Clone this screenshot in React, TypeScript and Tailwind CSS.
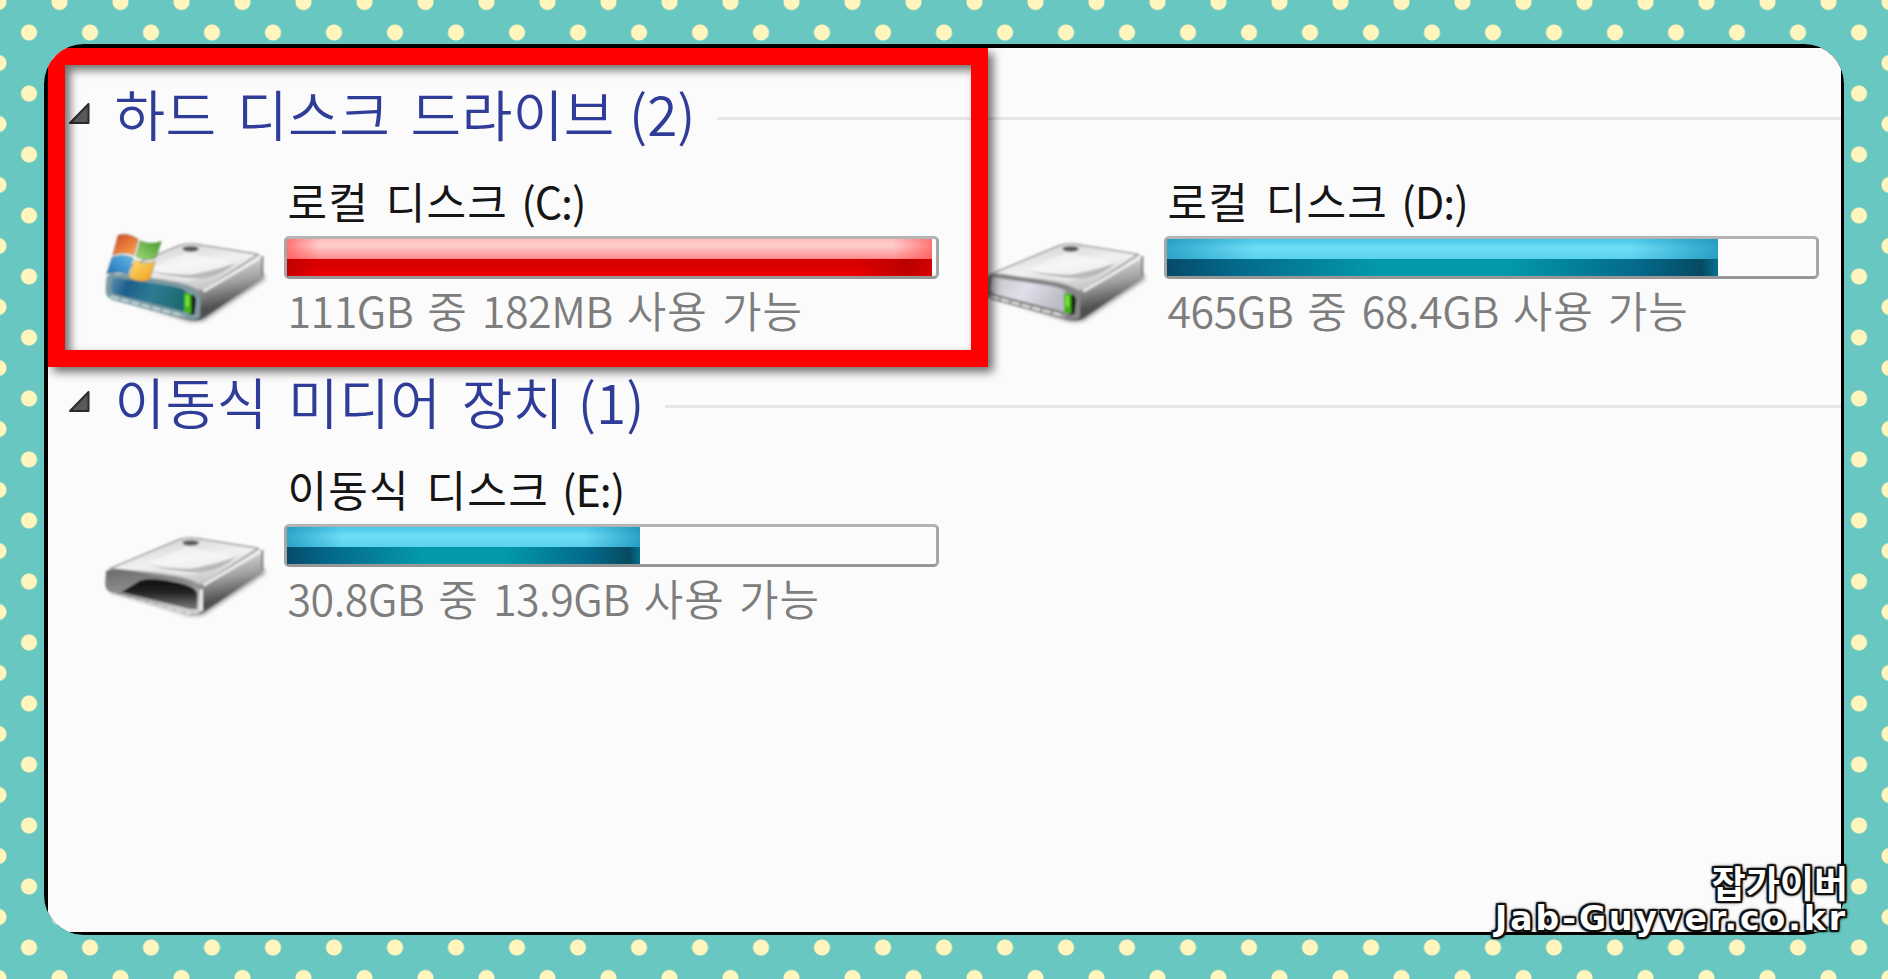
import { ReactNode, useId } from "react";
import clsx from "clsx";

type DriveKind = "system" | "local" | "removable";

interface Drive {
  name: string;
  letter: string;
  info: string;
  kind: DriveKind;
  fill: number;
  full?: boolean;
}

const hardDrives: Drive[] = [
  {
    name: "로컬 디스크",
    letter: "(C:)",
    info: "111GB 중 182MB 사용 가능",
    kind: "system",
    fill: 645,
    full: true,
  },
  {
    name: "로컬 디스크",
    letter: "(D:)",
    info: "465GB 중 68.4GB 사용 가능",
    kind: "local",
    fill: 551,
  },
];

const removableDrives: Drive[] = [
  {
    name: "이동식 디스크",
    letter: "(E:)",
    info: "30.8GB 중 13.9GB 사용 가능",
    kind: "removable",
    fill: 353,
  },
];

function WindowsFlag({ id }: { id: string }) {
  return (
    <g stroke="#5d6a5a" strokeOpacity="0.45" strokeWidth="3">
      <path
        d="M84 46 Q112 36 145 58 L132 106 Q102 92 68 106 Z"
        fill={`url(#${id}-red)`}
      />
      <path
        d="M150 62 Q182 76 214 64 L198 114 Q168 126 138 110 Z"
        fill={`url(#${id}-green)`}
      />
      <path
        d="M66 112 Q98 98 130 114 L114 164 Q84 152 50 162 Z"
        fill={`url(#${id}-blue)`}
      />
      <path
        d="M134 120 Q164 136 196 124 L180 178 Q150 192 116 172 Z"
        fill={`url(#${id}-yellow)`}
      />
    </g>
  );
}

function DriveIcon({ kind }: { kind: DriveKind }) {
  const id = useId();
  return (
    <svg
      className={clsx(
        "h-[120px] w-[190px] shrink-0",
        kind === "removable" && "mt-1.5",
      )}
      viewBox="0 0 570 360"
    >
      <defs>
        <linearGradient id={`${id}-top`} x1="0.2" y1="0" x2="0.7" y2="1">
          <stop offset="0" stopColor="#cfcfcf" />
          <stop offset="0.5" stopColor="#f1f1f1" />
          <stop offset="1" stopColor="#c0c0c0" />
        </linearGradient>
        <linearGradient id={`${id}-side`} x1="0.4" y1="0.2" x2="0.65" y2="0.85">
          <stop offset="0" stopColor="#f2f2f2" />
          <stop offset="0.35" stopColor="#c6c6c6" />
          <stop offset="0.6" stopColor="#a2a2a2" />
          <stop offset="0.8" stopColor="#777777" />
          <stop offset="1" stopColor="#4f4f4f" />
        </linearGradient>
        <linearGradient id={`${id}-front`} x1="0" y1="0" x2="1" y2="0.3">
          <stop offset="0" stopColor="#c3c3c6" />
          <stop offset="0.5" stopColor="#e0e0ec" />
          <stop offset="1" stopColor="#bcbcc4" />
        </linearGradient>
        <linearGradient id={`${id}-sys`} x1="0" y1="0" x2="1" y2="0.2">
          <stop offset="0" stopColor="#5e93ad" />
          <stop offset="0.25" stopColor="#1d5e8c" />
          <stop offset="0.6" stopColor="#2e7b93" />
          <stop offset="1" stopColor="#1d6a70" />
        </linearGradient>
        <linearGradient id={`${id}-shell`} x1="0" y1="0" x2="0.3" y2="1">
          <stop offset="0" stopColor="#6a6a6a" />
          <stop offset="0.6" stopColor="#949494" />
          <stop offset="1" stopColor="#cfcfcf" />
        </linearGradient>
        <linearGradient id={`${id}-hole`} x1="0" y1="0" x2="0" y2="1">
          <stop offset="0" stopColor="#0c0c0c" />
          <stop offset="0.45" stopColor="#262626" />
          <stop offset="1" stopColor="#7c7c7c" />
        </linearGradient>
        <linearGradient id={`${id}-red`} x1="0" y1="0" x2="0.8" y2="1">
          <stop offset="0" stopColor="#cf4a25" />
          <stop offset="1" stopColor="#f7a04a" />
        </linearGradient>
        <linearGradient id={`${id}-green`} x1="1" y1="0" x2="0" y2="1">
          <stop offset="0" stopColor="#459a2b" />
          <stop offset="1" stopColor="#a2d878" />
        </linearGradient>
        <linearGradient id={`${id}-blue`} x1="0" y1="1" x2="1" y2="0">
          <stop offset="0" stopColor="#1c6fb5" />
          <stop offset="1" stopColor="#69b9ea" />
        </linearGradient>
        <linearGradient id={`${id}-yellow`} x1="1" y1="1" x2="0" y2="0">
          <stop offset="0" stopColor="#ee9c12" />
          <stop offset="1" stopColor="#ffe079" />
        </linearGradient>
        <filter id={`${id}-soft`} x="-10%" y="-10%" width="120%" height="120%">
          <feGaussianBlur stdDeviation="3" />
        </filter>
        <filter id={`${id}-shadow`} x="-20%" y="-20%" width="140%" height="150%">
          <feGaussianBlur stdDeviation="7" />
        </filter>
      </defs>

      <path
        d="M50 226 L300 306 L340 304 L526 178 L520 160 L320 270 Z"
        fill="#555555"
        opacity="0.55"
        filter={`url(#${id}-shadow)`}
      />
      <g filter={`url(#${id}-soft)`}>
        {/* body silhouette */}
        <path
          d="M46 180 Q48 164 70 156 L268 76 Q300 66 342 76 L500 100 Q518 106 518 122 L518 168 Q514 178 500 186 L346 290 Q328 304 300 300 L68 238 Q44 230 46 212 Z"
          fill={`url(#${id}-side)`}
        />
        <path
          d="M60 164 L268 76 Q300 66 342 76 L504 103 L345 208 Q334 214 318 208 Q290 190 200 178 L60 164 Z"
          fill={`url(#${id}-top)`}
          stroke="#979797"
          strokeWidth="4"
        />
        <path
          d="M172 148 L290 98 L436 128 L334 176 Q280 190 232 168 Z"
          fill="#f6f6f6"
          opacity="0.7"
        />
        <path
          d="M172 150 Q250 176 330 176 Q400 164 438 128 L420 134 Q370 152 300 164 Q230 164 172 150 Z"
          fill="#9c9c9c"
          opacity="0.65"
        />
        <path
          d="M340 214 L512 112"
          stroke="#f8f8f8"
          strokeWidth="9"
          opacity="0.85"
        />
        <ellipse cx="302" cy="80" rx="30" ry="9" fill="#cfcfcf" />
        <ellipse cx="302" cy="87" rx="24" ry="8" fill="#5b5b5b" />
        <path d="M517 108 V170" stroke="#808080" strokeWidth="6" fill="none" />

        {kind === "removable" ? (
          <>
            <path
              d="M48 172 Q56 162 100 168 L230 186 Q324 196 332 230 L330 296 Q320 304 300 300 L68 238 Q44 230 46 206 Z"
              fill={`url(#${id}-shell)`}
            />
            <path
              d="M94 234 L150 200 Q190 190 250 204 Q318 216 322 240 L322 284 Q312 288 296 284 Z"
              fill={`url(#${id}-hole)`}
            />
            <path
              d="M60 238 L300 302"
              stroke="#dedede"
              strokeWidth="7"
              strokeDasharray="22 7"
              fill="none"
            />
            <path d="M334 226 V292" stroke="#efefef" strokeWidth="9" fill="none" />
          </>
        ) : (
          <>
            <path
              d="M50 170 Q56 158 100 162 L230 184 Q322 196 332 232 L330 290 Q320 302 296 298 L68 240 Q46 232 48 208 Z"
              fill={kind === "system" ? "#7d9aa3" : "#868686"}
            />
            <path
              d="M68 172 L230 196 Q290 204 296 226 L286 276 L74 222 Q62 216 62 202 Z"
              fill={
                kind === "system" ? `url(#${id}-sys)` : `url(#${id}-front)`
              }
            />
            <path
              d="M62 230 L282 288"
              stroke={kind === "system" ? "#c5dade" : "#e4e4e4"}
              strokeWidth="7"
              strokeDasharray="26 6"
              fill="none"
            />
            <path d="M296 222 Q318 222 318 240 L314 282 L298 286 Z" fill="#171c17" />
            <path d="M282 218 L304 222 L304 282 L282 276 Z" fill="#3fb416" />
            <path d="M288 226 L296 228 L296 262 L288 258 Z" fill="#84ea3a" />
          </>
        )}
        {kind === "system" && <WindowsFlag id={id} />}
      </g>
    </svg>
  );
}

function CapacityBar({ fill, full }: { fill: number; full?: boolean }) {
  return (
    <div className="-ml-px flex h-[43px] w-[655px] rounded-[5px] border-[3px] border-t-[#b4b4b4] border-r-[#a6a6a6] border-b-[#979797] border-l-[#a6a6a6] bg-[#fcfcfc]">
      <div className="flex flex-col" style={{ width: fill }}>
        <div
          className={clsx(
            "h-5",
            full
              ? "bg-[linear-gradient(90deg,#ff5050b0,#ff505000_5%,#ff505000_94%,#ff5050b0),linear-gradient(180deg,#ffbcbc,#ffcdcd_35%,#ff8a8a)]"
              : "bg-[linear-gradient(90deg,#0f86b0a0,#1593bc00_16%,#1593bc00_84%,#0f86b0b0),linear-gradient(180deg,#4cc6e8,#6fdff8_45%,#5ad2ee)]",
          )}
        />
        <div
          className={clsx(
            "h-[17px]",
            full
              ? "bg-[linear-gradient(90deg,#b00000a0,#b0000000_5%,#b0000000_88%,#b00000c0_96%,#c8000080),linear-gradient(180deg,#d80000,#dc0000_50%,#f20000)]"
              : "bg-[linear-gradient(90deg,#064a68,#04688a_12%,#0398ac_38%,#0398ac_62%,#04688a_86%,#064a60_97%,#067090)]",
          )}
        />
      </div>
    </div>
  );
}

// Sizes are set tighter than the Hangul words around them.
function DriveInfo({ text }: { text: string }) {
  return (
    <p className="flex h-[62px] gap-[14px] pl-[3px] text-[43px] leading-[60px] font-[350] text-[#7d7d7d]">
      {text.split(" ").map((word) => (
        <span
          key={word}
          className={/\d/.test(word) ? "tracking-[-0.5px]" : "tracking-[1px]"}
        >
          {word}
        </span>
      ))}
    </p>
  );
}

function DriveItem({ drive }: { drive: Drive }) {
  return (
    <div className="flex h-[170px] w-[880px] shrink-0 items-start">
      <div className="mt-[46px] mr-[5px]">
        <DriveIcon kind={drive.kind} />
      </div>
      <div className="flex flex-col whitespace-nowrap">
        <p className="flex h-[62px] items-center gap-[13px] pl-[3px] text-[43px] leading-[54px] font-normal tracking-[1.200px] text-[#151515] [word-spacing:6px]">
          <span className="-mt-2.5">{drive.name}</span>
          <span className="-mt-2.5 tracking-[-1px]">{drive.letter}</span>
        </p>
        <CapacityBar fill={drive.fill} full={drive.full} />
        <DriveInfo text={drive.info} />
      </div>
    </div>
  );
}

interface SectionProps {
  title: string;
  count: number;
  children: ReactNode;
}

function Section({ title, count, children }: SectionProps) {
  return (
    <section className="flex h-72 flex-col">
      <h2 className="flex h-[88px] items-center pl-5 text-[55px] leading-[74px] font-[350] whitespace-nowrap text-[#2f3c98]">
        <svg className="-mt-3 h-6 w-6 shrink-0" viewBox="0 0 24 24">
          <path
            d="M2 22 L20.500 3 V22 Z"
            fill="#585858"
            stroke="#2b2b2b"
            strokeWidth="2"
            strokeLinejoin="round"
          />
        </svg>
        <span className="-mt-3.5 ml-[23px] tracking-[0.5px] [word-spacing:7.500px]">
          {title}
        </span>
        <span className="-mt-3.5 ml-3.5">({count})</span>
        <span className="ml-[21px] h-[3px] flex-1 bg-[#e6e6e6]" />
      </h2>
      <div className="flex pt-[11px] pl-[42px]">{children}</div>
    </section>
  );
}

function Watermark() {
  return (
    <div className="absolute top-[857px] right-[40px] flex flex-col items-end font-bold whitespace-nowrap text-white [text-shadow:2px_0_1px_#111,-2px_0_1px_#111,0_2px_1px_#111,0_-2px_1px_#111,2px_2px_1px_#111,-2px_-2px_1px_#111,2px_-2px_1px_#111,-2px_2px_1px_#111,0_0_5px_#000]">
      <span className="h-11 text-[37px] leading-[50px]">잡가이버</span>
      <span className="font-['DejaVu_Sans'] text-[33px] leading-[36px] tracking-[3px]">
        Jab-Guyver.co.kr
      </span>
    </div>
  );
}

export default function App() {
  return (
    <div className="relative h-[979px] w-[1888px] overflow-hidden bg-[#69c7c2] bg-[radial-gradient(circle,#fff5bd_7.5px,#fff5bd00_8.5px),radial-gradient(circle,#fff5bd_7.5px,#fff5bd00_8.5px)] bg-[size:61px_61px] bg-[position:-1.500px_2px,29px_-28.500px] p-11 font-['Noto_Sans_CJK_KR',sans-serif] font-light">
      <main className="h-[891px] w-[1800px] overflow-hidden rounded-[40px] bg-black p-[3.500px]">
        <div className="relative h-full overflow-hidden bg-[#fbfbfb] pt-[27px]">
          <Section title="하드 디스크 드라이브" count={2}>
            {hardDrives.map((drive) => (
              <DriveItem key={drive.letter} drive={drive} />
            ))}
          </Section>
          <Section title="이동식 미디어 장치" count={1}>
            {removableDrives.map((drive) => (
              <DriveItem key={drive.letter} drive={drive} />
            ))}
          </Section>
          {/* highlight around the full drive */}
          <div className="absolute top-0 left-0 h-[319px] w-[940px] border-[17.500px] border-[#ff0000] drop-shadow-[5px_5px_5px_#00000090]" />
        </div>
      </main>
      <Watermark />
    </div>
  );
}
